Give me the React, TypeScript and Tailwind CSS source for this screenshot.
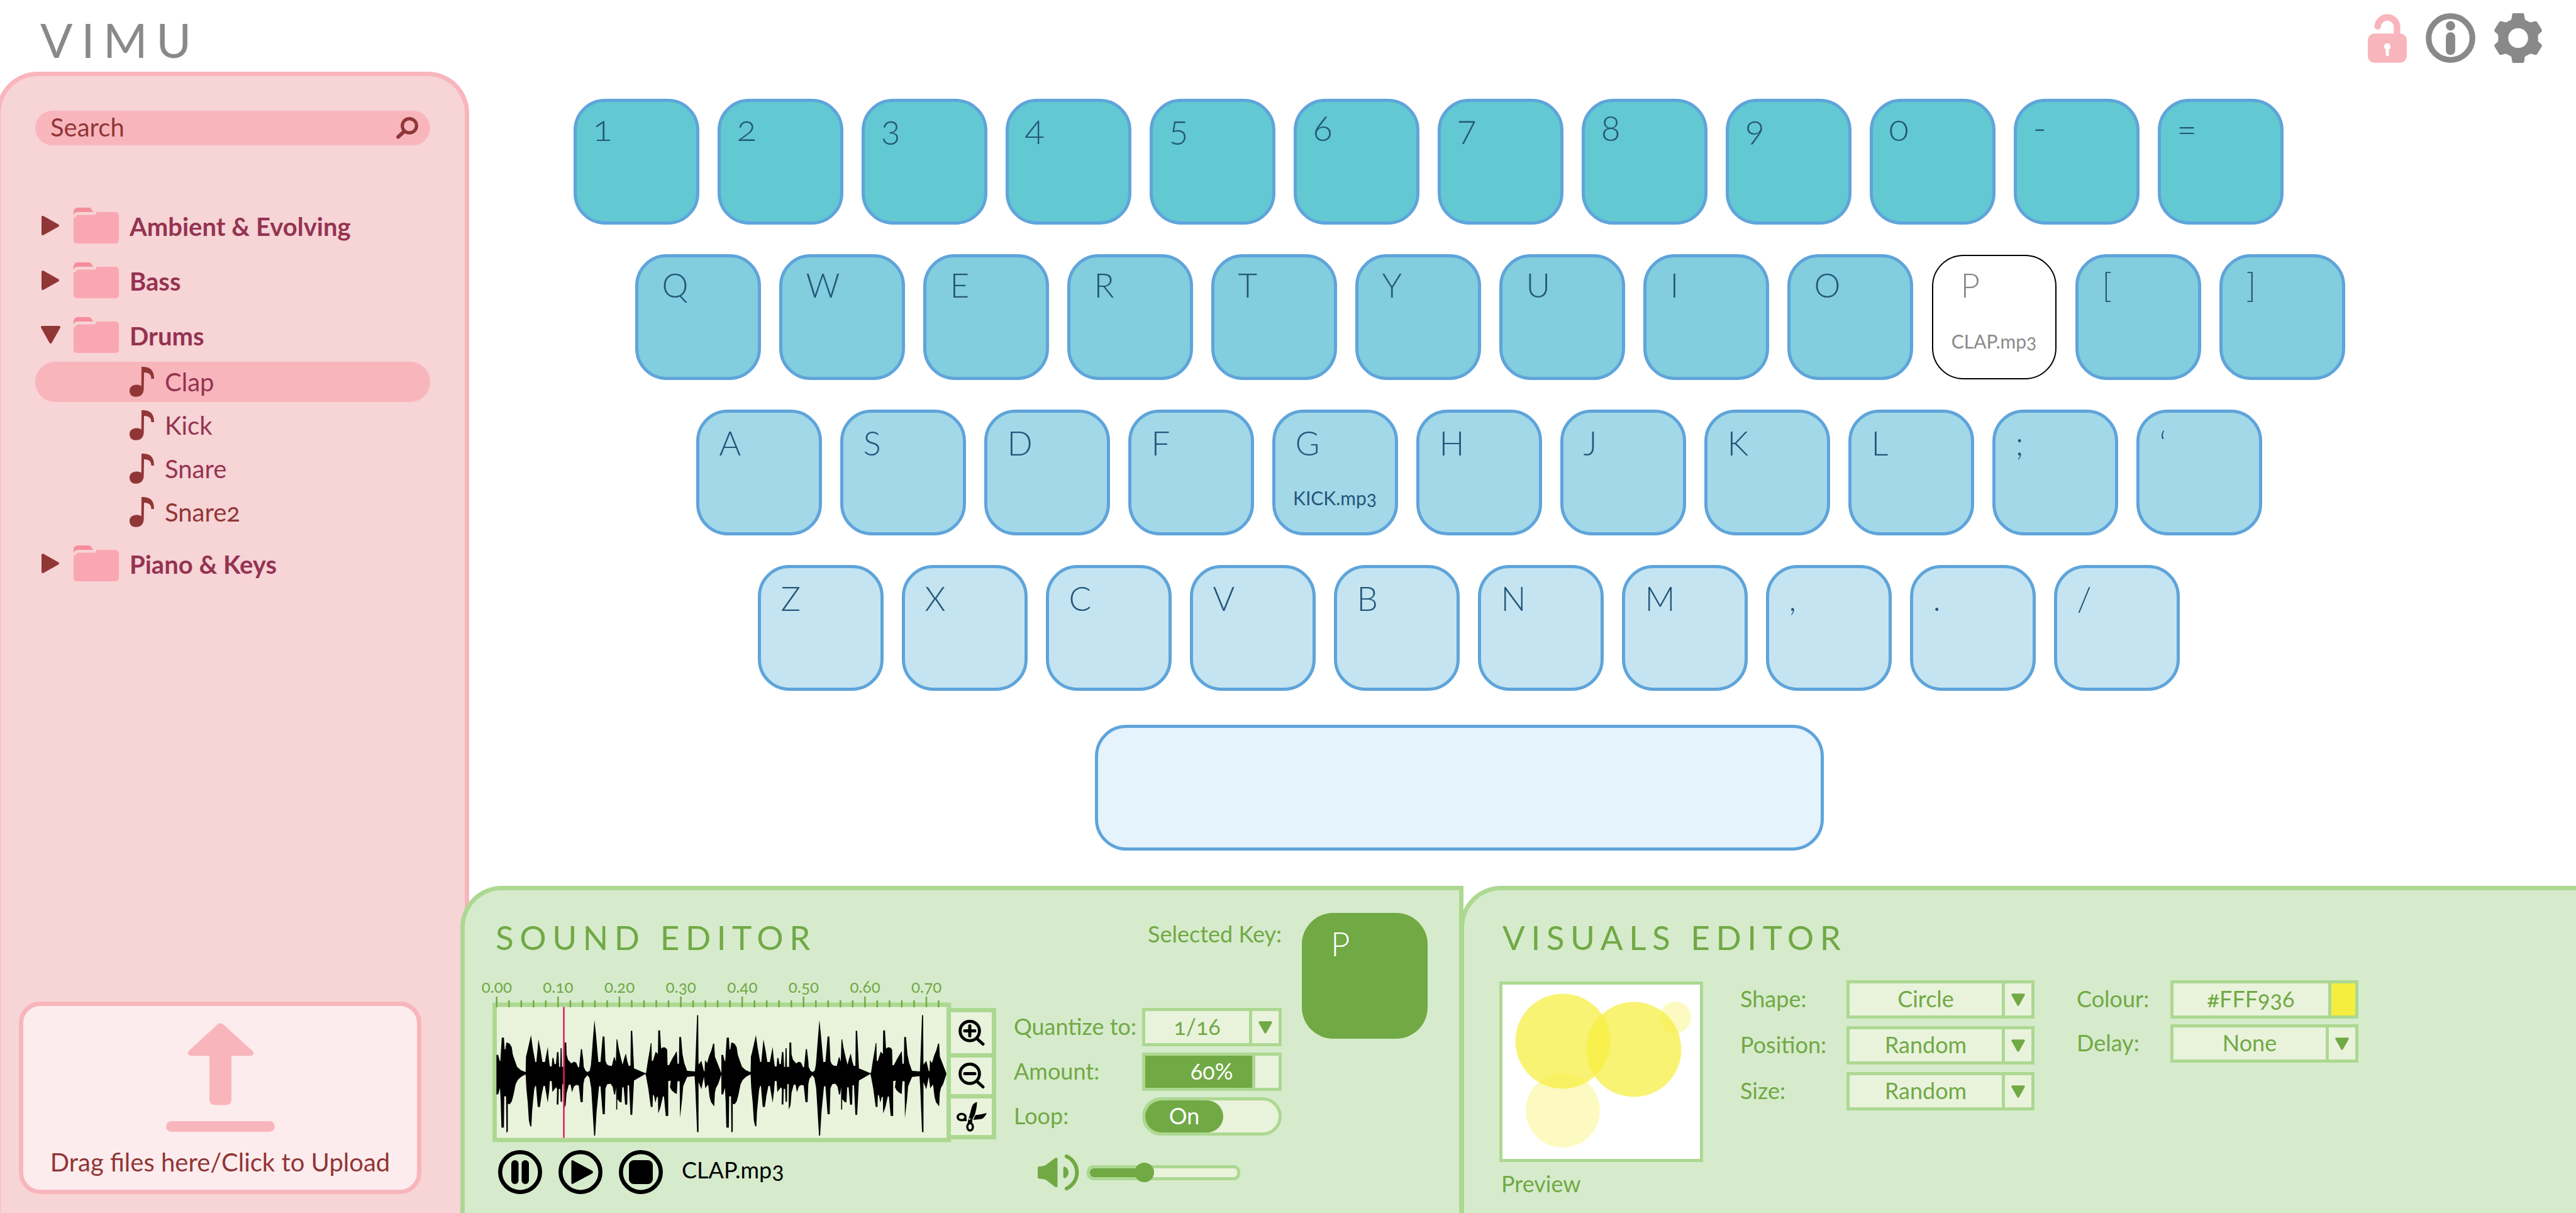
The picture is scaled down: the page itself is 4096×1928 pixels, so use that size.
import type { ReactNode } from "react";

type KeyRow = {
  keys: string[];
  offset: string;
  tone: string;
  pad: string;
  letter: string;
};

const KEY_ROWS: KeyRow[] = [
  { keys: ["1", "2", "3", "4", "5", "6", "7", "8", "9", "0", "-", "="], offset: "ml-0", tone: "bg-[#62c8d2]", pad: "pt-2 pl-[26px]", letter: "text-[58px]" },
  { keys: ["Q", "W", "E", "R", "T", "Y", "U", "I", "O", "P", "[", "]"], offset: "ml-[98px]", tone: "bg-[#82cdde]", pad: "pt-3 pl-[38px]", letter: "text-[53px]" },
  { keys: ["A", "S", "D", "F", "G", "H", "J", "K", "L", ";", "‘"], offset: "ml-[195px]", tone: "bg-[#a3d8e8]", pad: "pt-4 pl-[32px]", letter: "text-[53px]" },
  { keys: ["Z", "X", "C", "V", "B", "N", "M", ",", ".", "/"], offset: "ml-[293px]", tone: "bg-[#c4e4f1]", pad: "pt-4 pl-[32px]", letter: "text-[53px]" },
];

const ASSIGNED: Record<string, string> = { P: "CLAP.mp3", G: "KICK.mp3" };
const SELECTED = "P";

function LockIcon() {
  return (
    <svg className="h-[79px] w-[62px]" viewBox="0 0 62 79" fill="none" aria-hidden="true">
      <path d="M15.7 20.8A15.4 15.4 0 0 1 46.4 20.8V36" stroke="#f8b6bc" strokeWidth="10.4" strokeLinecap="round" />
      <rect y="32.3" width="62" height="46.5" rx="10.5" fill="#f8b6bc" />
      <circle cx="31" cy="52.9" r="5.1" fill="#fff" />
      <path d="M31 54V65.8" stroke="#fff" strokeWidth="5" strokeLinecap="round" />
    </svg>
  );
}

function InfoIcon() {
  return (
    <svg className="size-[79px]" viewBox="0 0 79 79" fill="none" aria-hidden="true">
      <circle cx="39.5" cy="39.5" r="34.8" stroke="#898989" strokeWidth="9.2" />
      <circle cx="39.5" cy="20" r="7.4" fill="#898989" />
      <rect x="32.1" y="30.3" width="14.8" height="36" rx="7.2" fill="#898989" />
    </svg>
  );
}

function GearIcon() {
  return (
    <svg className="h-[79px] w-[76px]" viewBox="0 0 75.6 78.6" aria-hidden="true">
      <path
        fill="#898989"
        fillRule="evenodd"
        d="M29.8 0H45.8Q47 .2 47.5 3L48.2 8.5Q48.5 10.5 50.2 11.2Q53 12.3 55.2 13.8Q57 15 59 14.2L64.5 12.7Q66.8 12.2 68 14.2L75 25.6Q76.2 27.6 74.6 29.3L70.4 33Q69.2 34.2 69.3 36V42.6Q69.2 44.4 70.4 45.6L74.6 49.3Q76.2 51 75 53L68 64.4Q66.8 66.4 64.5 65.9L59 64.4Q57 63.6 55.2 64.8Q53 66.3 50.2 67.4Q48.5 68.1 48.2 70.1L47.5 75.6Q47 78.4 45.8 78.6H29.8Q28.6 78.4 28.1 75.6L27.4 70.1Q27.1 68.1 25.4 67.4Q22.6 66.3 20.4 64.8Q18.6 63.6 16.6 64.4L11.1 65.9Q8.8 66.4 7.6 64.4L.6 53Q-.6 51 1 49.3L5.2 45.6Q6.4 44.4 6.3 42.6V36Q6.4 34.2 5.2 33L1 29.3Q-.6 27.6 .6 25.6L7.6 14.2Q8.8 12.2 11.1 12.7L16.6 14.2Q18.6 15 20.4 13.8Q22.6 12.3 25.4 11.2Q27.1 10.5 27.4 8.5L28.1 3Q28.6 .2 29.8 0ZM37.8 23.6A15.7 15.7 0 1 0 37.81 23.6Z"
      />
    </svg>
  );
}

function FolderIcon() {
  return (
    <svg className="h-[57px] w-[72px]" viewBox="0 0 72 57" aria-hidden="true">
      <path d="M0 11.5V8Q0 0 7 0H24Q26 0 27 1L31.4 7H7Q3 7 2 9Z" fill="#f58e9b" />
      <path d="M36.4 7H66Q72 7 72 14V51Q72 57 66 57H6Q0 57 0 51V16Q3 16.5 4 13.5Q5 11.5 7.5 11.5H32Q36.5 11.5 36.4 7Z" fill="#f9a8b3" />
    </svg>
  );
}

function NoteIcon() {
  return (
    <svg className="h-12 w-[39px]" viewBox="0 0 39 48" aria-hidden="true">
      <path
        d="M19 0C28 0 39 1 39 19H34.5C34.5 12 31 9.5 23 9L22.6 36C22 44 17 47.8 9.5 47.8C4 47.8 0 44 0 38C0 32 5 28.5 10.5 28.5C14 28.5 16.5 29 18.7 30.5Z"
        fill="#913636"
      />
    </svg>
  );
}

function Disclosure({ open }: { open: boolean }) {
  return (
    <svg className="h-[31px] w-7 overflow-visible" viewBox="0 0 28 31" aria-hidden="true">
      <path
        d={open ? "M1 3H28L14.5 27Z" : "M2 2V29L26 15.5Z"}
        fill="#913636"
        stroke="#913636"
        strokeWidth="4"
        strokeLinejoin="round"
      />
    </svg>
  );
}

function DownArrow() {
  return (
    <svg className="h-5 w-[22px]" viewBox="0 0 22 20" aria-hidden="true">
      <path d="M2 2H20L11 18Z" fill="#71a945" stroke="#71a945" strokeWidth="3.5" strokeLinejoin="round" />
    </svg>
  );
}

function Folder({ name, open = false, children }: { name: string; open?: boolean; children?: ReactNode }) {
  return (
    <li>
      <button type="button" aria-expanded={open} className="flex h-[57px] w-full items-center pl-[10px] text-left">
        <Disclosure open={open} />
        <span className="ml-[23px]">
          <FolderIcon />
        </span>
        <span className="ml-[17px] pt-0.5 text-[40px] leading-[44px] font-bold text-[#943352]">{name}</span>
      </button>
      {children}
    </li>
  );
}

function Sound({ name, active = false, tone = "text-[#943352]" }: { name: string; active?: boolean; tone?: string }) {
  return (
    <li>
      <button
        type="button"
        className={`flex h-16 w-full items-center gap-[17px] rounded-full pl-[150px] text-left text-[40px] leading-[44px] oldstyle-nums ${tone} ${active ? "bg-[#f8b6bc]" : ""}`}
      >
        <NoteIcon />
        {name}
      </button>
    </li>
  );
}

function Sidebar() {
  return (
    <aside className="-ml-[6px] flex w-[752px] shrink-0 flex-col rounded-t-[66px] border-x-[7px] border-t-[7px] border-[#f8b6bc] bg-[#f7d4d6] text-[#913636]">
      <div className="mx-[55px] mt-[55px] flex h-[55px] items-center rounded-full bg-[#f8b6bc] pr-[19px] pl-[24px]">
        <input
          aria-label="Search"
          placeholder="Search"
          className="min-w-0 flex-1 bg-transparent pb-1 text-[40px] leading-[44px] outline-none placeholder:text-[#913636] placeholder:opacity-100"
        />
        <svg className="size-[35px]" viewBox="0 0 35 35" fill="none" stroke="#913636" aria-hidden="true">
          <circle cx="21" cy="13.9" r="11.3" strokeWidth="5.2" />
          <path d="M12 23.5L3.2 31.6" strokeWidth="6" strokeLinecap="round" />
        </svg>
      </div>

      <ul className="mx-[55px] mt-[99px] flex flex-col gap-[30px]">
        <Folder name="Ambient & Evolving" />
        <Folder name="Bass" />
        <Folder name="Drums" open>
          <ul className="mt-[14px] -mb-[9px] flex flex-col gap-[5px]">
            <Sound name="Clap" active />
            <Sound name="Kick" />
            <Sound name="Snare" />
            <Sound name="Snare2" tone="text-[#913636]" />
          </ul>
        </Folder>
        <Folder name="Piano & Keys" />
      </ul>

      <label className="mt-auto mr-[69px] mb-[30px] ml-[29px] flex flex-col items-center rounded-[34px] border-[7px] border-[#f8b6bc] bg-[#fdecee] pt-[27px] pb-[22px]">
        <svg className="size-[173px]" viewBox="0 0 173 173" fill="#f8b6bc" aria-hidden="true">
          <path d="M81 3Q86.5 -2.5 92 3L137.5 44.5Q142 51 134 52.3H104V121Q104 130.4 95 130.4H78Q69 130.4 69 121V52.3H41Q32 51 36 44.5Z" />
          <rect y="156" width="173" height="17" rx="8.5" />
        </svg>
        <span className="mt-[26px] text-[40px] leading-[44px]">Drag files here/Click to Upload</span>
        <input type="file" className="sr-only" />
      </label>
    </aside>
  );
}

function Keyboard() {
  return (
    <section aria-label="Keyboard" className="flex flex-1 justify-center pt-[43px] pr-[188px] pb-14">
      <div className="flex flex-col">
        <div className="flex flex-col gap-[47px] text-[#24567a]">
          {KEY_ROWS.map((row) => (
            <div key={row.offset} className={`flex gap-[29px] ${row.offset}`}>
              {row.keys.map((k) => {
                const look =
                  k === SELECTED
                    ? "m-px size-[198px] border-2 border-black bg-white pt-[14px] pl-[44px] text-[#8a8a8a]"
                    : `size-[200px] border-[5px] border-[#5fa4da] ${row.tone} ${row.pad}`;
                return (
                  <button key={k} type="button" className={`relative flex shrink-0 flex-col items-start rounded-[50px] ${look}`}>
                    <span className={`leading-[64px] font-light oldstyle-nums ${row.letter}`}>{k}</span>
                    {ASSIGNED[k] && (
                      <span className="absolute inset-x-0 top-[119px] text-center text-[30px] leading-8 oldstyle-nums">{ASSIGNED[k]}</span>
                    )}
                  </button>
                );
              })}
            </div>
          ))}
        </div>
        <button
          type="button"
          aria-label="Space"
          className="mt-[54px] h-[200px] w-[1159px] self-center rounded-[50px] border-[5px] border-[#5fa4da] bg-[#e5f3fd]"
        />
      </div>
    </section>
  );
}

const WAVE_TOP =
  "110,822 115,822 119,850 121,850 125,740 131,740 133,796 135,796 138,762 147,768 153,785 156,820 162,850 168,878 178,893 190,902 192,902 193,830 196,810 200,780 207,728 212,790 219,855 222,855 228,748 234,800 239,855 246,855 254,784 257,840 260,876 265,876 267,836 270,836 273,865 277,865 280,808 284,808 286,878 289,878 290,790 293,790 294,878 300,878 301,763 306,763 307,820 311,845 320,862 327,854 334,858 339,880 342,880 347,794 350,794 354,850 355,878 360,897 366,903 372,895 375,870 377,830 381,740 385,657 389,720 396,855 402,855 408,735 413,735 416,850 420,866 427,873 434,873 440,830 443,840 445,855 447,748 449,748 453,790 459,835 464,868 468,840 473,814 477,850 481,873 486,873 487,708 491,708 496,886 500,888 528,908 530,905 534,860 540,800 543,766 545,766 546,850 549,850 557,806 563,818 564,706 569,706 572,792 577,786 583,786 589,796 590,870 594,870 603,840 616,803 618,863 622,863 623,737 628,737 632,818 637,860 645,897 667,900 668,860 673,634 676,634 677,868 685,849 692,898 694,898 695,846 701,860 707,825 713,800 718,768 721,768 723,830 730,860 741,908";
const WAVE_BOTTOM =
  "110,1008 115,1008 120,977 122,1040 124,1165 131,1165 132,1017 137,1017 138,1190 142,1183 142,1052 147,1055 153,1042 158,1010 164,960 170,940 180,924 192,914 194,980 198,1050 201,1130 204,1155 208,1162 210,1090 216,985 219,968 221,968 226,1068 232,1068 237,1010 242,968 246,968 254,1048 258,990 260,945 265,945 267,997 277,975 280,982 279,1056 284,1056 285,982 289,982 290,1043 294,1043 295,960 299,960 299,1080 304,1060 307,1000 313,962 318,962 322,998 328,970 334,964 341,966 346,1045 352,1045 354,960 357,935 365,918 371,930 376,980 380,1090 384,1203 387,1203 391,1090 398,970 402,970 408,1102 414,1102 416,980 421,960 430,958 436,972 440,1008 443,1008 446,975 446,1080 449,1080 449,1030 456,1045 461,1046 463,975 467,975 471,1057 477,1057 478,965 482,965 486,1105 491,1105 496,943 528,912 530,925 536,980 543,1068 548,1068 549,1012 552,1012 556,1048 560,1020 563,1020 564,1098 570,1070 577,1018 580,1018 585,1110 592,1110 592,946 599,943 597,975 602,990 609,1000 616,1007 618,946 624,946 625,1120 631,1030 634,970 645,926 666,922 668,980 673,1187 677,1187 677,950 685,984 692,925 696,980 700,970 704,962 708,1020 712,1045 721,1065 723,1000 726,978 732,960 741,915";
const WAVE = `${WAVE_TOP} ${WAVE_BOTTOM.split(" ").reverse().join(" ")}`;

const TICKS = Array.from({ length: 37 }, (_, i) => i);

function Waveform() {
  return (
    <svg className="h-[232px] w-[730px]" viewBox="0 0 730 232" role="img" aria-label="Waveform of CLAP.mp3">
      <rect x="3.5" y="13" width="722.5" height="215" fill="#e9f3dc" stroke="#add892" strokeWidth="7" />
      {TICKS.map((i) => (
        <rect key={i} x={5.5 + i * 19.52} y={i % 5 === 0 ? 0 : 6} width="2.5" height={i % 5 === 0 ? 17 : 11} fill="#71a945" />
      ))}
      <g transform="matrix(.5668 0 0 .3363 -56 -183.6)">
        <polygon points={WAVE} />
        <polygon points={WAVE} transform="translate(631 0)" />
      </g>
      <rect x="112.3" y="16.5" width="2.5" height="208" fill="#e8195f" />
    </svg>
  );
}

function ZoomIcon({ plus }: { plus: boolean }) {
  return (
    <svg className="size-[42px]" viewBox="0 0 42 42" fill="none" stroke="#000" strokeLinecap="round" aria-hidden="true">
      <circle cx="18" cy="17.7" r="15.4" strokeWidth="4.8" />
      <path d="M29.5 30L39 38.5" strokeWidth="5" />
      <path d={plus ? "M10 17.5H26M18 9.5V25.5" : "M10 17.5H26"} strokeWidth="5" />
    </svg>
  );
}

function ScissorsIcon() {
  return (
    <svg className="size-12" viewBox="0 0 48 48" aria-hidden="true">
      <path d="M32.5 .5Q25.5 2 23.5 11L19 28L17.5 33H24.5L25.5 27Q29.5 22 31 13Q32.5 7 32.5 .5Z" />
      <path d="M48 18Q44 28 36 28L26.5 29L30 21.5Q39 20.5 48 18Z" />
      <ellipse cx="8" cy="24.5" rx="6.2" ry="5" fill="none" stroke="#000" strokeWidth="3.6" />
      <path d="M9 30.5L16 31V27L13 24.5Z" />
      <ellipse cx="21.5" cy="40" rx="4.4" ry="5.9" fill="none" stroke="#000" strokeWidth="3.6" />
      <circle cx="20.8" cy="27.6" r="1.3" fill="#e9f3dc" />
    </svg>
  );
}

function RoundButton({ label, children }: { label: string; children: ReactNode }) {
  return (
    <button type="button" aria-label={label}>
      <svg className="size-[70px]" viewBox="0 0 70 70" aria-hidden="true">
        <circle cx="35" cy="35" r="31.7" fill="none" stroke="#000" strokeWidth="6.6" />
        {children}
      </svg>
    </button>
  );
}

function SelectBox({ id, value }: { id: string; value: string }) {
  return (
    <div className="relative h-[61px] border-[5px] border-[#add892] bg-[#e9f3dc]">
      <select
        id={id}
        defaultValue={value}
        className="size-full appearance-none bg-transparent pr-[47px] pb-1 text-center text-[36px] leading-[44px] outline-none oldstyle-nums [text-align-last:center]"
      >
        <option>{value}</option>
      </select>
      <span className="pointer-events-none absolute inset-y-0 right-0 flex w-[47px] items-center justify-center border-l-[5px] border-[#add892]">
        <DownArrow />
      </span>
    </div>
  );
}

function FieldLabel({ htmlFor, children }: { htmlFor: string; children: ReactNode }) {
  return (
    <label htmlFor={htmlFor} className="self-center pb-1 text-[36px] leading-[44px] whitespace-nowrap">
      {children}
    </label>
  );
}

function SoundEditor() {
  return (
    <section className="relative z-10 flex rounded-tl-[66px] border-x-[7px] border-t-[7px] border-[#add892] bg-[#d6ebcc] pr-[50px] pl-[44px] text-[#71a945]">
      <div className="flex shrink-0 flex-col pt-[43px]">
        <h2 className="ml-[5px] text-[53px] leading-[64px] tracking-[0.18em]">SOUND EDITOR</h2>
        <div className="mt-8 -ml-[42px] grid w-[781px] grid-cols-8 text-center text-[26px] leading-7 oldstyle-nums">
          {["0.00", "0.10", "0.20", "0.30", "0.40", "0.50", "0.60", "0.70"].map((t) => (
            <span key={t}>{t}</span>
          ))}
        </div>
        <div className="mt-0.5 flex">
          <Waveform />
          <div className="mt-[18px] -ml-2 flex h-[209px] w-[79px] flex-col gap-[7px] bg-[#add892] p-[7px]">
            <button type="button" aria-label="Zoom in" className="flex h-[65px] items-center justify-center bg-[#e9f3dc]">
              <ZoomIcon plus />
            </button>
            <button type="button" aria-label="Zoom out" className="flex h-[58px] items-center justify-center bg-[#e9f3dc]">
              <ZoomIcon plus={false} />
            </button>
            <button type="button" aria-label="Cut" className="flex h-[58px] items-center justify-center bg-[#e9f3dc]">
              <ScissorsIcon />
            </button>
          </div>
        </div>
        <div className="mt-3 mb-[30px] ml-[9px] flex items-center gap-[26px]">
          <RoundButton label="Pause">
            <rect x="21" y="16" width="11.5" height="38" rx="5.7" />
            <rect x="37.5" y="16" width="11.5" height="38" rx="5.7" />
          </RoundButton>
          <RoundButton label="Play">
            <path d="M20.5 18.5Q20.5 14.5 24 17L53 32.5Q57 35 53 37.5L24 53Q20.5 55.5 20.5 51.5Z" />
          </RoundButton>
          <RoundButton label="Stop">
            <rect x="16" y="16" width="38" height="38" rx="8" />
          </RoundButton>
          <span className="ml-1 pb-2 text-[36px] leading-[44px] text-black oldstyle-nums">CLAP.mp3</span>
        </div>
      </div>

      <div className="ml-7 flex shrink-0 flex-col pt-[47px]">
        <p className="text-right text-[36px] leading-[44px]">Selected Key:</p>
        <div className="mt-24 grid grid-cols-[204px_222px] gap-y-[10px]">
          <FieldLabel htmlFor="quantize">Quantize to:</FieldLabel>
          <SelectBox id="quantize" value="1/16" />

          <FieldLabel htmlFor="amount">Amount:</FieldLabel>
          <div className="relative flex h-[61px] border-[5px] border-[#add892] bg-[#e9f3dc]">
            <div className="flex w-4/5 items-center justify-end bg-[#71a945] pr-[30px] pb-1 text-[36px] leading-[44px] text-white oldstyle-nums">
              60%
            </div>
            <div className="w-[5px] bg-[#add892]" />
            <input id="amount" type="range" defaultValue={60} className="absolute inset-0 size-full opacity-0" />
          </div>

          <FieldLabel htmlFor="loop">Loop:</FieldLabel>
          <div className="relative h-[61px] rounded-full border-[5px] border-[#add892] bg-[#e9f3dc]">
            <div className="flex h-full w-[124px] items-center justify-center rounded-full bg-[#71a945] pb-1 text-[36px] leading-[44px] text-white">
              On
            </div>
            <input id="loop" type="checkbox" role="switch" defaultChecked className="absolute inset-0 size-full opacity-0" />
          </div>
        </div>
        <div className="mt-[30px] ml-[38px] flex items-center gap-3">
          <svg className="h-[57px] w-[66px]" viewBox="0 0 66 57" fill="#71a945" aria-hidden="true">
            <path d="M0 21.5Q0 19 3 19Q10 19 14 16L27 6Q31 3.5 31.5 7V50Q31 54 27 51L14 41Q10 38.5 3 38.5Q0 38.5 0 36Z" />
            <path d="M40.7 22Q41 18 44.5 20Q49 23 49 28.5Q49 34 44.5 37Q41 39 40.7 35Z" />
            <path d="M46 3A28 28 0 0 1 46 54" fill="none" stroke="#71a945" strokeWidth="6" strokeLinecap="round" />
          </svg>
          <div className="relative flex h-6 w-[244px] items-center rounded-[10px] border-[5px] border-[#add892] bg-[#e9f3dc]">
            <div className="h-full w-[88px] rounded-l-[6px] bg-[#71a945]" />
            <div className="-ml-[17px] size-[31px] shrink-0 rounded-full bg-[#71a945]" />
            <input type="range" aria-label="Volume" defaultValue={36} className="absolute inset-0 size-full opacity-0" />
          </div>
        </div>
      </div>

      <div className="mt-9 ml-8 size-[200px] shrink-0 rounded-[50px] bg-[#71a945] pt-[17px] pl-[46px] text-[53px] leading-[64px] font-light text-white">
        P
      </div>
    </section>
  );
}

function VisualsEditor() {
  return (
    <section className="-ml-[6px] flex flex-col rounded-tl-[66px] border-t-[7px] border-l-[7px] border-[#add892] bg-[#d6ebcc] pt-[43px] pl-14 text-[#71a945]">
      <h2 className="ml-[5px] text-[53px] leading-[64px] tracking-[0.18em]">VISUALS EDITOR</h2>
      <div className="mt-9 flex items-start">
        <figure className="mt-0.5">
          <div className="border-[5px] border-[#add892] bg-white">
            <svg className="h-[277px] w-[314px]" viewBox="0 0 314 277" fill="#f6ee3f" aria-hidden="true">
              <circle cx="96" cy="90" r="75.5" opacity=".72" />
              <circle cx="209" cy="103" r="75.5" opacity=".72" />
              <circle cx="96" cy="200" r="59" opacity=".32" />
              <circle cx="275" cy="52" r="25" opacity=".32" />
            </svg>
          </div>
          <figcaption className="mt-3 ml-[3px] text-[36px] leading-[44px]">Preview</figcaption>
        </figure>
        <div className="ml-[59px] grid grid-cols-[169px_299px] gap-y-3">
          <FieldLabel htmlFor="shape">Shape:</FieldLabel>
          <SelectBox id="shape" value="Circle" />
          <FieldLabel htmlFor="position">Position:</FieldLabel>
          <SelectBox id="position" value="Random" />
          <FieldLabel htmlFor="size">Size:</FieldLabel>
          <SelectBox id="size" value="Random" />
        </div>
        <div className="ml-[67px] grid grid-cols-[149px_299px] gap-y-[9px]">
          <FieldLabel htmlFor="colour">Colour:</FieldLabel>
          <div className="flex h-[61px] border-[5px] border-[#add892] bg-[#e9f3dc]">
            <input
              id="colour"
              defaultValue="#FFF936"
              className="min-w-0 flex-1 bg-transparent pb-1 text-center text-[36px] leading-[44px] outline-none oldstyle-nums"
            />
            <button type="button" aria-label="Pick colour" className="w-[43px] border-l-[5px] border-[#add892] bg-[#f6ee3f]" />
          </div>
          <FieldLabel htmlFor="delay">Delay:</FieldLabel>
          <SelectBox id="delay" value="None" />
        </div>
      </div>
    </section>
  );
}

export default function App() {
  return (
    <div className="flex min-h-screen flex-col overflow-hidden bg-white [font-family:Lato,'Open_Sans',sans-serif]">
      <header className="flex h-[114px] items-start justify-between pr-[54px] pl-16 text-[#898989]">
        <h1 className="pt-[19px] text-[76px] leading-[88px] tracking-[0.18em]">VIMU</h1>
        <nav aria-label="Tools" className="flex gap-[30px] pt-[21px]">
          <button type="button" aria-label="Unlock">
            <LockIcon />
          </button>
          <button type="button" aria-label="Information">
            <InfoIcon />
          </button>
          <button type="button" aria-label="Settings">
            <GearIcon />
          </button>
        </nav>
      </header>
      <div className="flex flex-1">
        <Sidebar />
        <main className="-ml-[14px] flex min-w-0 flex-1 flex-col">
          <Keyboard />
          <div className="grid grid-cols-[1595fr_1769fr]">
            <SoundEditor />
            <VisualsEditor />
          </div>
        </main>
      </div>
    </div>
  );
}
